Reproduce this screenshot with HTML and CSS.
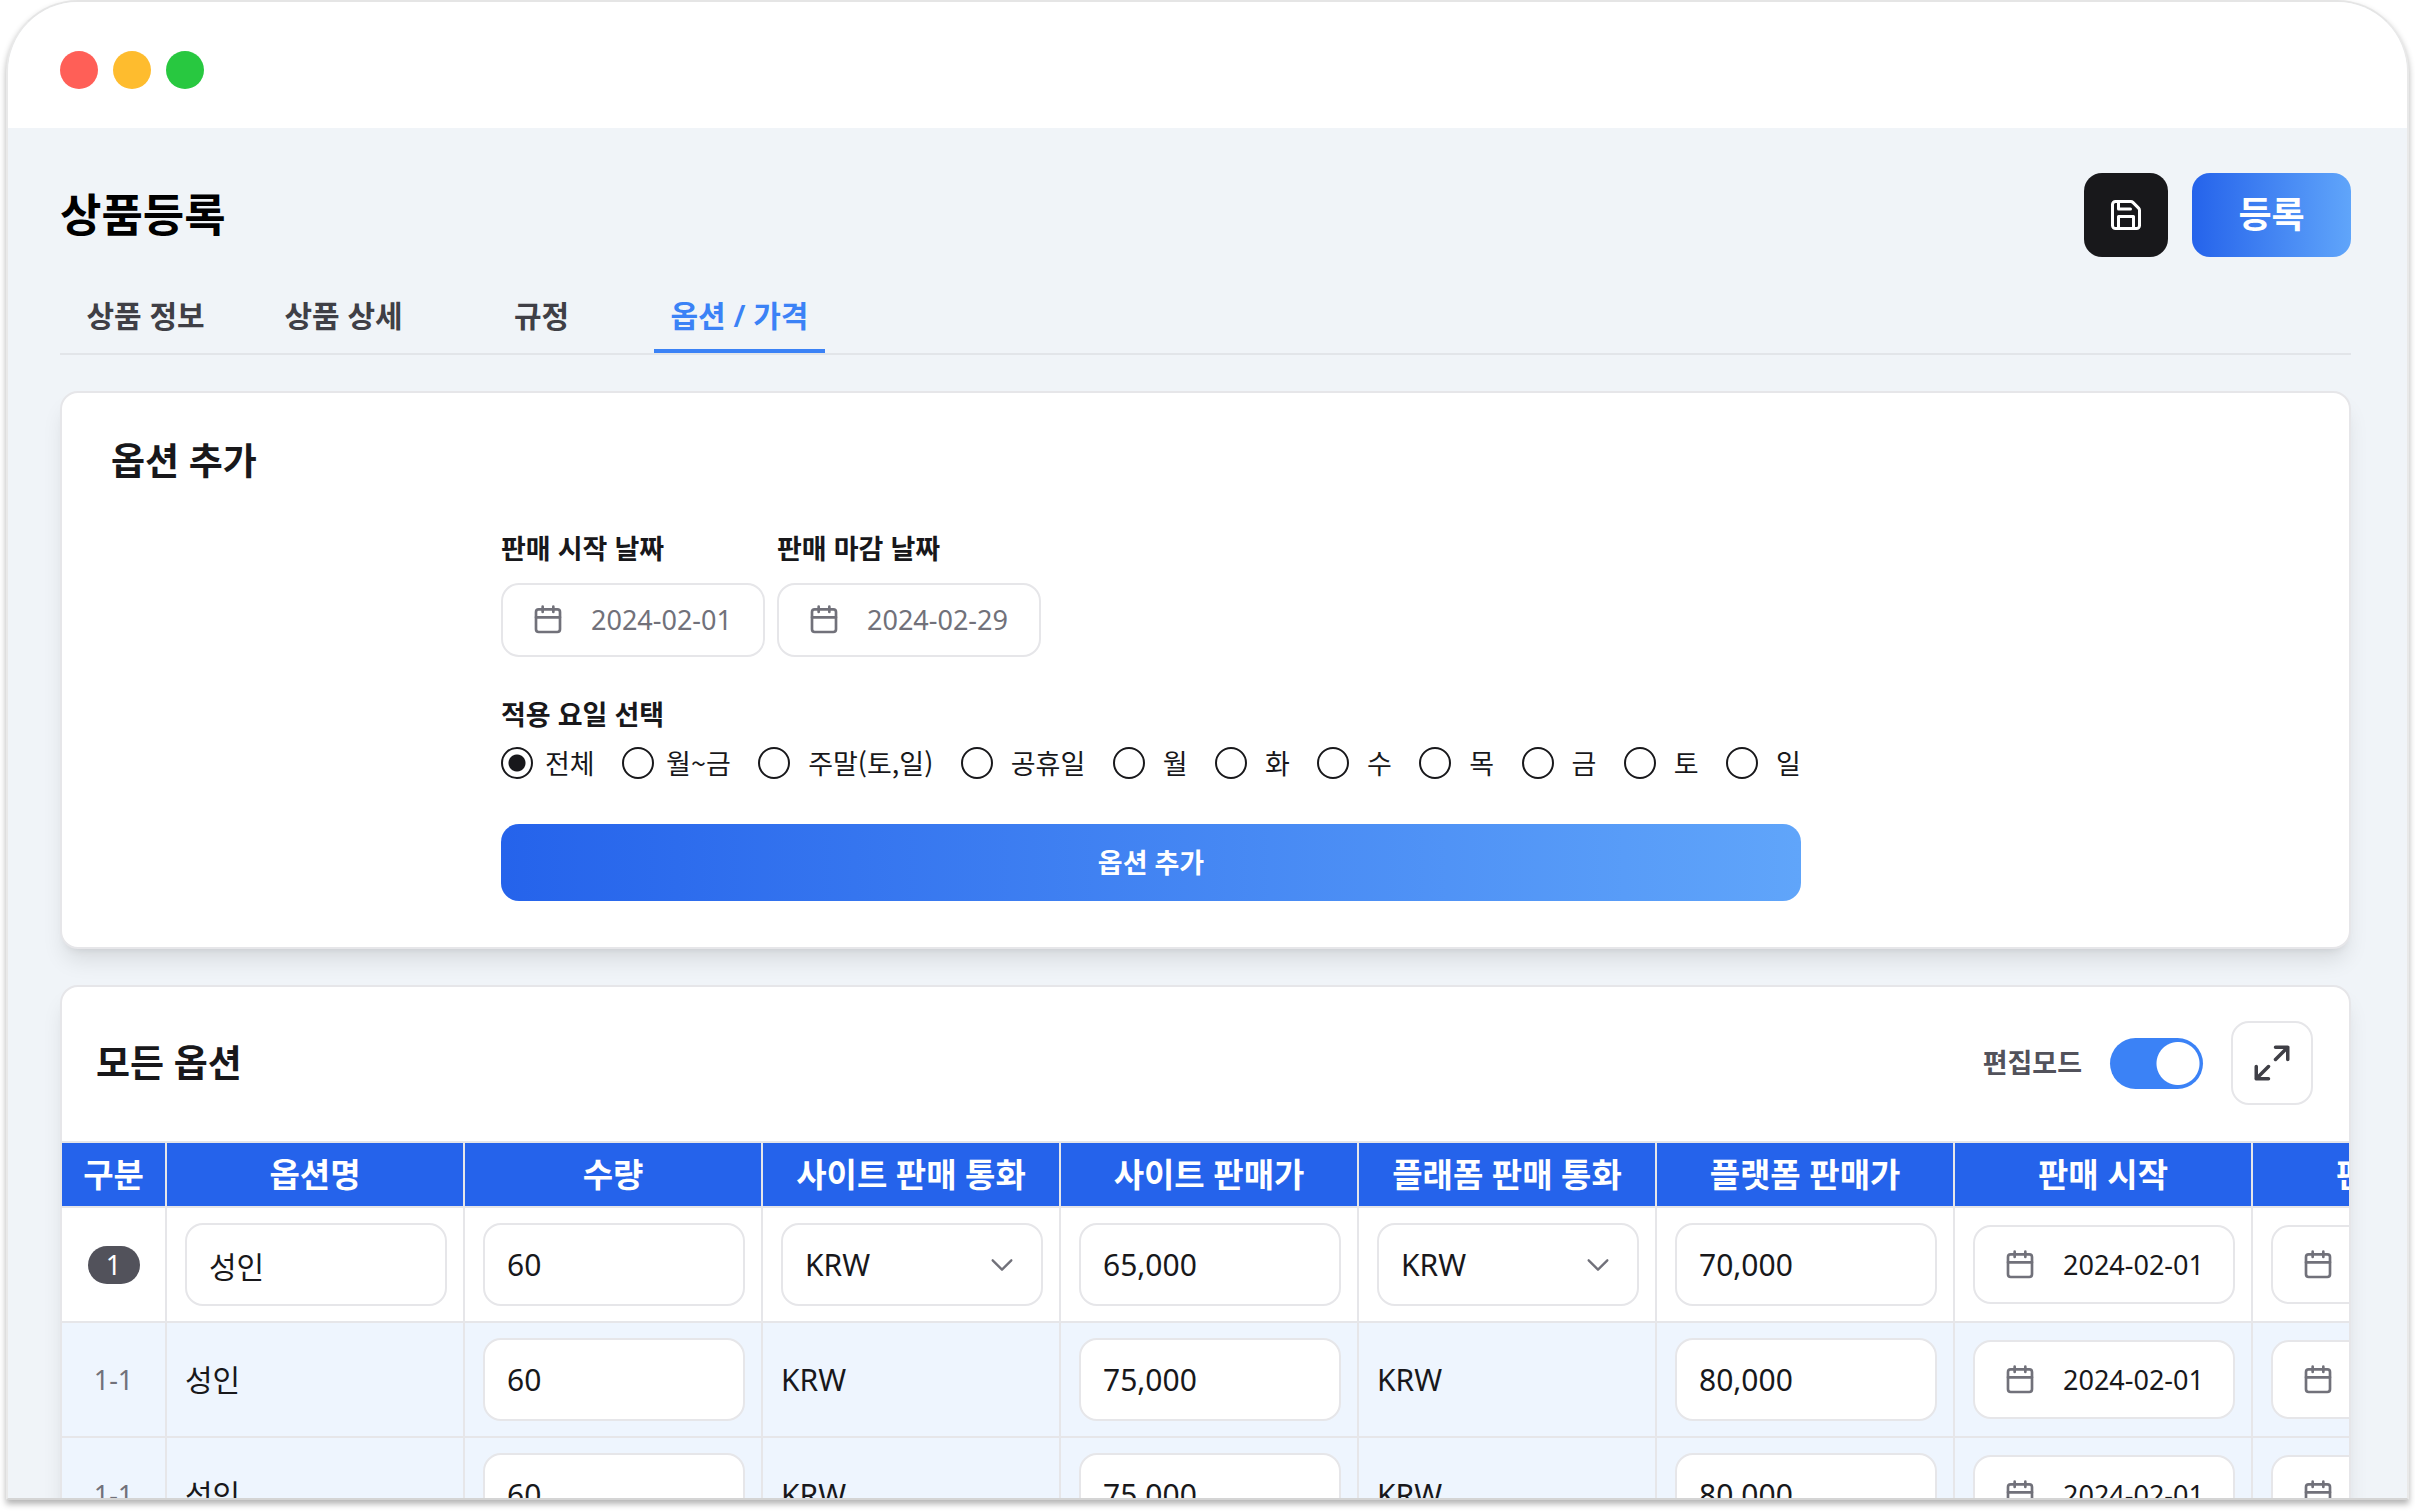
FILE: index.html
```html
<!DOCTYPE html>
<html lang="ko">
<head>
<meta charset="utf-8">
<title>상품등록</title>
<link rel="stylesheet" href="styles.css">
</head>
<body>
<svg class="sprite" aria-hidden="true">
  <symbol id="calendar" viewBox="0 0 24 24"><rect x="3" y="4" width="18" height="17" rx="2"/><path d="M8 2v4M16 2v4M3 10h18"/></symbol>
  <symbol id="chevron" viewBox="0 0 24 24"><path d="M4 8l8 8 8-8"/></symbol>
  <symbol id="expand" viewBox="0 0 24 24"><path d="M14 10l7-7M14 3h7v7M10 14l-7 7M10 21H3v-7"/></symbol>
  <symbol id="save" viewBox="0 0 24 24"><path d="M15.2 3a2 2 0 0 1 1.4.6l3.8 3.8a2 2 0 0 1 .6 1.4V19a2 2 0 0 1-2 2H5a2 2 0 0 1-2-2V5a2 2 0 0 1 2-2z"/><path d="M17 21v-8H7v8M7 3v5h8"/></symbol>
</svg>
<div class="window">
  <div class="titlebar"><span class="dot red"></span><span class="dot yellow"></span><span class="dot green"></span></div>
  <main class="content">
    <header class="page-head">
      <h1>상품등록</h1>
      <div class="actions">
        <button class="save" type="button" aria-label="저장"><svg class="icon-save"><use href="#save"/></svg></button>
        <button class="primary submit" type="button">등록</button>
      </div>
    </header>
    <nav class="tabs">
      <a href="#info">상품 정보</a>
      <a href="#detail">상품 상세</a>
      <a href="#rule">규정</a>
      <a href="#option" class="active">옵션 / 가격</a>
    </nav>
    <section class="card add-card">
      <h2>옵션 추가</h2>
      <form class="add-form">
        <div class="dates">
          <div class="field">
            <label for="start">판매 시작 날짜</label>
            <div class="date"><svg><use href="#calendar"/></svg><input id="start" type="text" value="2024-02-01"></div>
          </div>
          <div class="field">
            <label for="end">판매 마감 날짜</label>
            <div class="date"><svg><use href="#calendar"/></svg><input id="end" type="text" value="2024-02-29"></div>
          </div>
        </div>
        <fieldset class="days">
          <legend>적용 요일 선택</legend>
          <div class="day-list">
            <label class="near"><input type="radio" name="day" checked>전체</label>
            <label class="near"><input type="radio" name="day">월~금</label>
            <label><input type="radio" name="day">주말(토,일)</label>
            <label><input type="radio" name="day">공휴일</label>
            <label><input type="radio" name="day">월</label>
            <label><input type="radio" name="day">화</label>
            <label><input type="radio" name="day">수</label>
            <label><input type="radio" name="day">목</label>
            <label><input type="radio" name="day">금</label>
            <label><input type="radio" name="day">토</label>
            <label><input type="radio" name="day">일</label>
          </div>
        </fieldset>
        <button class="primary add" type="button">옵션 추가</button>
      </form>
    </section>
    <section class="card list-card">
      <div class="list-head">
        <h2>모든 옵션</h2>
        <div class="tools">
          <label class="edit">편집모드<input class="switch" type="checkbox" role="switch" checked></label>
          <button class="expand" type="button" aria-label="전체 화면"><svg><use href="#expand"/></svg></button>
        </div>
      </div>
      <div class="table-clip">
        <table>
          <colgroup><col class="col-no"><col span="8"></colgroup>
          <thead>
            <tr><th>구분</th><th>옵션명</th><th>수량</th><th>사이트 판매 통화</th><th>사이트 판매가</th><th>플래폼 판매 통화</th><th>플랫폼 판매가</th><th>판매 시작</th><th>판매 마감</th></tr>
          </thead>
          <tbody>
            <tr>
              <td class="no"><span class="badge">1</span></td>
              <td><input class="box" type="text" aria-label="옵션명" value="성인"></td>
              <td><input class="box" type="text" aria-label="수량" value="60"></td>
              <td><div class="select"><select class="box" aria-label="사이트 판매 통화"><option>KRW</option></select><svg><use href="#chevron"/></svg></div></td>
              <td><input class="box" type="text" aria-label="사이트 판매가" value="65,000"></td>
              <td><div class="select"><select class="box" aria-label="플래폼 판매 통화"><option>KRW</option></select><svg><use href="#chevron"/></svg></div></td>
              <td><input class="box" type="text" aria-label="플랫폼 판매가" value="70,000"></td>
              <td><div class="date"><svg><use href="#calendar"/></svg><input type="text" aria-label="판매 시작" value="2024-02-01"></div></td>
              <td><div class="date"><svg><use href="#calendar"/></svg><input type="text" aria-label="판매 마감" value="2024-02-29"></div></td>
            </tr>
            <tr class="sub">
              <td class="no">1-1</td>
              <td>성인</td>
              <td><input class="box" type="text" aria-label="수량" value="60"></td>
              <td>KRW</td>
              <td><input class="box" type="text" aria-label="사이트 판매가" value="75,000"></td>
              <td>KRW</td>
              <td><input class="box" type="text" aria-label="플랫폼 판매가" value="80,000"></td>
              <td><div class="date"><svg><use href="#calendar"/></svg><input type="text" aria-label="판매 시작" value="2024-02-01"></div></td>
              <td><div class="date"><svg><use href="#calendar"/></svg><input type="text" aria-label="판매 마감" value="2024-02-29"></div></td>
            </tr>
            <tr class="sub">
              <td class="no">1-1</td>
              <td>성인</td>
              <td><input class="box" type="text" aria-label="수량" value="60"></td>
              <td>KRW</td>
              <td><input class="box" type="text" aria-label="사이트 판매가" value="75,000"></td>
              <td>KRW</td>
              <td><input class="box" type="text" aria-label="플랫폼 판매가" value="80,000"></td>
              <td><div class="date"><svg><use href="#calendar"/></svg><input type="text" aria-label="판매 시작" value="2024-02-01"></div></td>
              <td><div class="date"><svg><use href="#calendar"/></svg><input type="text" aria-label="판매 마감" value="2024-02-29"></div></td>
            </tr>
          </tbody>
        </table>
      </div>
    </section>
  </main>
</div>
</body>
</html>
```
FILE: styles.css
```css
* { box-sizing: border-box; }

body {
  margin: 0;
  height: 100vh;
  padding: 0 6px 12px;
  overflow: hidden;
  background: #fff;
  color: #18181b;
  font-family: "Noto Sans", "Noto Sans CJK KR", sans-serif;
  font-size: 27px;
  line-height: 36px;
}

button, input, select { font: inherit; color: inherit; margin: 0; }
button { border: 0; padding: 0; cursor: pointer; }

svg {
  flex: none;
  fill: none;
  stroke: currentColor;
  stroke-width: 2;
  stroke-linecap: round;
  stroke-linejoin: round;
}

.sprite { position: absolute; width: 0; height: 0; }

.window {
  height: 100%;
  overflow: hidden;
  border: 2px solid #e5e5e5;
  border-color: #e5e5e5 #e9e9e9 #d4d4d4;
  border-radius: 72px 72px 0 0;
  background: #f0f4f8;
  box-shadow: 0 4px 6px rgba(0, 0, 0, .3);
}

.titlebar {
  display: flex;
  align-items: center;
  gap: 15px;
  height: 126px;
  padding: 10px 52px 0;
  background: #fff;
}
.dot { width: 38px; height: 38px; border-radius: 50%; }
.red { background: #ff5f57; }
.yellow { background: #febc2e; }
.green { background: #28c840; }

.content { padding: 45px 56px 0 52px; }

.page-head { display: flex; justify-content: space-between; align-items: center; }

h1, h2 { margin: 0; font-weight: 700; }
h1 { color: #000; font-size: 45px; line-height: 60px; }
h2 { font-size: 37px; line-height: 52px; }

.actions { display: flex; gap: 24px; }
.save, .submit { height: 84px; border-radius: 18px; }
.save { display: grid; place-items: center; width: 84px; background: #18181b; color: #fff; }
.icon-save { width: 36px; height: 36px; }
.primary { background: linear-gradient(90deg, #2563eb, #60a5fa); color: #fff; font-weight: 700; }
.submit { width: 159px; font-size: 36px; }

.tabs { display: flex; gap: 27px; margin-top: 22px; border-bottom: 2px solid #e2e5e9; }
.tabs a {
  width: 171px;
  padding: 18px 0 14px;
  border-bottom: 4px solid transparent;
  color: #3f3f46;
  font-size: 30px;
  font-weight: 600;
  line-height: 38px;
  text-align: center;
  text-decoration: none;
  white-space: nowrap;
}
.tabs .active { border-color: #3b82f6; color: #3b82f6; }

.card {
  border: 2px solid #e6e6e9;
  border-radius: 18px;
  background: #fff;
  box-shadow: 0 15px 22px -4px rgba(0, 0, 0, .1), 0 6px 9px -6px rgba(0, 0, 0, .1);
}

.add-card { margin-top: 36px; padding: 42px 49px 46px; }
.add-form { width: 1300px; max-width: 100%; margin: 44px auto 0 390px; }

.dates { display: flex; gap: 12px; }
.field { width: 264px; }
.field label, legend { display: block; padding: 0; font-weight: 700; }
.field label { margin-bottom: 16px; }
.field .date { height: 74px; color: #71717a; }

.date {
  display: flex;
  align-items: center;
  gap: 27px;
  height: 79px;
  padding: 0 16px 0 29px;
  border: 2px solid #e6e6e9;
  border-radius: 18px;
  background: #fff;
}
.date svg { width: 32px; height: 32px; color: #71717a; }
.date input { flex: 1; width: 0; min-width: 0; padding: 0; border: 0; background: none; outline: 0; }

.days { margin: 40px 0 0; padding: 0; border: 0; }
.day-list {
  display: flex;
  justify-content: space-between;
  margin-top: 12px;
  font-family: "Noto Sans CJK KR", sans-serif;
  white-space: nowrap;
}
.day-list label { display: flex; align-items: center; gap: 18px; }
.day-list .near { gap: 12px; }
input[type="radio"] {
  appearance: none;
  width: 32px;
  height: 32px;
  border: 2px solid #18181b;
  border-radius: 50%;
}
input[type="radio"]:checked { background: radial-gradient(circle, #18181b 8px, transparent 9px); }

.add { width: 100%; height: 77px; margin-top: 43px; border-radius: 18px; }

.list-card { margin-top: 36px; overflow: hidden; }
.list-head { display: flex; align-items: center; justify-content: space-between; padding: 34px 36px 36px 34px; }
.tools, .edit { display: flex; align-items: center; gap: 28px; }
.edit { color: #52525b; font-weight: 600; }
.switch {
  appearance: none;
  width: 93px;
  height: 51px;
  border-radius: 26px;
  background: radial-gradient(circle at 68px 50%, #fff 21px, #3b82f6 22px);
}
.expand {
  display: grid;
  place-items: center;
  width: 82px;
  height: 84px;
  border: 2px solid #e6e6e9;
  border-radius: 18px;
  background: #fff;
  color: #3f3f46;
}
.expand svg { width: 42px; height: 42px; }

.table-clip { overflow: hidden; }
table { width: 2489px; table-layout: fixed; border-collapse: separate; border-spacing: 0; font-size: 30px; }
.col-no { width: 105px; }
th {
  height: 67px;
  padding: 0;
  border: solid #e6e6e9;
  border-width: 2px 2px 2px 0;
  background: #2563eb;
  color: #fff;
  font-size: 33px;
  font-weight: 700;
  white-space: nowrap;
}
td { height: 115px; padding: 0 16px 0 18px; border: solid #e6e6e9; border-width: 0 2px 2px 0; }
.sub td { background: #eef5fe; }
.no { padding: 0; color: #71717a; font-size: 27px; text-align: center; }
.badge { display: inline-block; width: 52px; border-radius: 19px; background: #52525b; color: #fff; line-height: 38px; }
td .date { font-size: 27px; }

.box {
  display: block;
  width: 100%;
  height: 83px;
  padding: 0 22px;
  border: 2px solid #e6e6e9;
  border-radius: 18px;
  background: #fff;
}
.select { display: grid; align-items: center; }
.select > * { grid-area: 1 / 1; }
.select select { appearance: none; }
.select svg { justify-self: end; width: 28px; height: 28px; margin-right: 27px; color: #71717a; pointer-events: none; }
```
